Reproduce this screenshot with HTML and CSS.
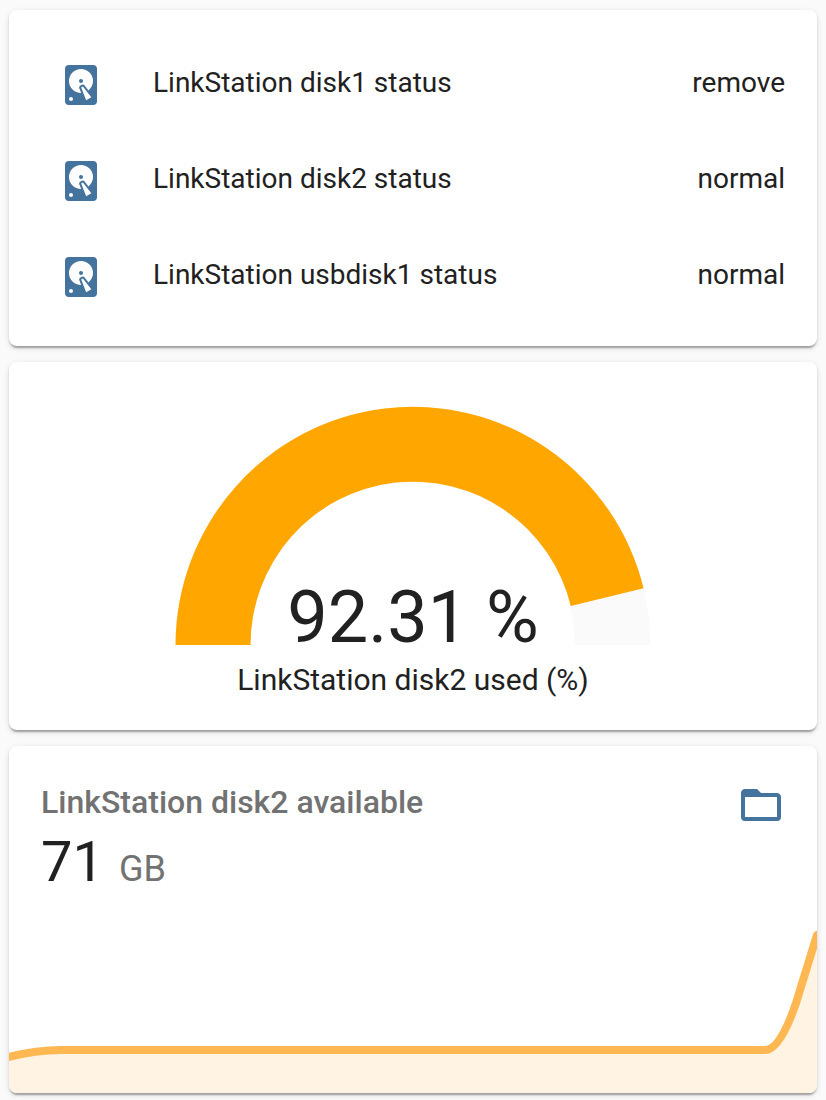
FILE: index.html
```
<!DOCTYPE html>
<html lang="en">
<head>
<meta charset="utf-8">
<title>LinkStation</title>
<link rel="stylesheet" href="styles.css">
</head>
<body>
<svg class="defs" aria-hidden="true">
  <symbol id="harddisk" viewBox="0 0 24 24"><path d="M6,2H18A2,2 0 0,1 20,4V20A2,2 0 0,1 18,22H6A2,2 0 0,1 4,20V4A2,2 0 0,1 6,2M12,4A6,6 0 0,0 6,10C6,13.31 8.69,16 12.1,16L11.22,13.77C10.95,13.29 11.11,12.68 11.59,12.4L12.45,11.9C12.93,11.63 13.54,11.79 13.82,12.27L15.74,14.69C17.12,13.59 18,11.9 18,10A6,6 0 0,0 12,4M12,9A1,1 0 0,1 13,10A1,1 0 0,1 12,11A1,1 0 0,1 11,10A1,1 0 0,1 12,9M7,18A1,1 0 0,0 6,19A1,1 0 0,0 7,20A1,1 0 0,0 8,19A1,1 0 0,0 7,18M12.09,13.27L14.58,19.58L17.17,18.08L12.95,12.77L12.09,13.27Z"/></symbol>
</svg>
<main class="column">
  <section class="card entities">
    <div class="row"><svg class="icon"><use href="#harddisk"/></svg><span class="name">LinkStation disk1 status</span><span class="state">remove</span></div>
    <div class="row"><svg class="icon"><use href="#harddisk"/></svg><span class="name">LinkStation disk2 status</span><span class="state">normal</span></div>
    <div class="row"><svg class="icon"><use href="#harddisk"/></svg><span class="name">LinkStation usbdisk1 status</span><span class="state">normal</span></div>
  </section>
  <section class="card gauge">
    <svg class="dial" viewBox="0 0 476 239">
      <path class="dial-base" d="M0.5 239A237.5 237.5 0 0 1 475.5 239H400A162.5 162.5 0 0 0 75 239Z"/>
      <path class="dial-value" d="M0.5 239A237.5 238.5 0 0 1 468.6 182.2L395.8 200.1A162.5 163.5 0 0 0 75.5 239Z"/>
    </svg>
    <div class="gauge-value">92.31 %</div>
    <div class="gauge-label">LinkStation disk2 used (%)</div>
  </section>
  <section class="card sensor">
    <header class="sensor-head">
      <span class="sensor-name">LinkStation disk2 available</span>
      <svg class="icon" viewBox="0 0 24 24"><path d="M20,18H4V8H20M20,6H12L10,4H4C2.89,4 2,4.89 2,6V18A2,2 0 0,0 4,20H20A2,2 0 0,0 22,18V8C22,6.89 21.1,6 20,6Z"/></svg>
    </header>
    <div class="reading"><span class="amount">71</span><span class="unit">GB</span></div>
    <svg class="graph" viewBox="0 0 808 167">
      <path class="area" d="M0 131Q26 124 52 124H756Q771 124 787 77L808 9V167H0Z"/>
      <path class="line" d="M-2 131.5Q26 124 52 124H756Q771 124 787 77L808 9"/>
    </svg>
  </section>
</main>
</body>
</html>
```
FILE: styles.css
```
* { box-sizing: border-box; }
body { margin: 0; background: #fafafa; color: #212121; font-family: Roboto, sans-serif; }
.defs { display: none; }
.column { display: flex; flex-direction: column; gap: 16px; padding: 10px 9px 7px; }
.card {
  background: #fff;
  border-radius: 8px;
  overflow: hidden;
  box-shadow: 0 4px 2px -2px rgba(0,0,0,.2), 0 2px 2px rgba(0,0,0,.14), 0 2px 6px rgba(0,0,0,.12);
}
.icon { width: 48px; height: 48px; flex: none; fill: #44739e; }

.entities { height: 336px; padding: 32px 32px 32px 48px; display: flex; flex-direction: column; gap: 16px; }
.row { display: flex; align-items: center; height: 80px; font-size: 28px; line-height: 40px; }
.row .icon { margin-top: 6px; }
.name { flex: 1; margin-left: 48px; }
.name, .state { padding-top: 2px; }

.gauge { height: 368px; padding-top: 44px; display: flex; flex-direction: column; align-items: center; }
.dial { width: 476px; height: 239px; flex: none; }
.dial-base { fill: #fafafa; }
.dial-value { fill: #ffa600; }
.gauge-value { font-size: 72px; line-height: 84px; margin-top: -69px; white-space: nowrap; }
.gauge-label { font-size: 30px; line-height: 36px; margin-top: 2px; }

.sensor { height: 347px; display: flex; flex-direction: column; }
.sensor-head { display: flex; justify-content: space-between; padding: 35px 32px 0; height: 83px; }
.sensor-name { font-size: 32px; line-height: 42px; font-weight: 500; color: #727272; }
.reading { display: flex; align-items: baseline; padding: 0 32px; height: 97px; line-height: 66px; }
.amount { font-size: 56px; }
.unit { font-size: 36px; margin-left: 15px; color: #727272; }
.graph { display: block; width: 808px; height: 167px; flex: none; }
.area { fill: #fff3e4; }
.line { fill: none; stroke: #ffb751; stroke-width: 8; stroke-linecap: round; stroke-linejoin: round; }
```
